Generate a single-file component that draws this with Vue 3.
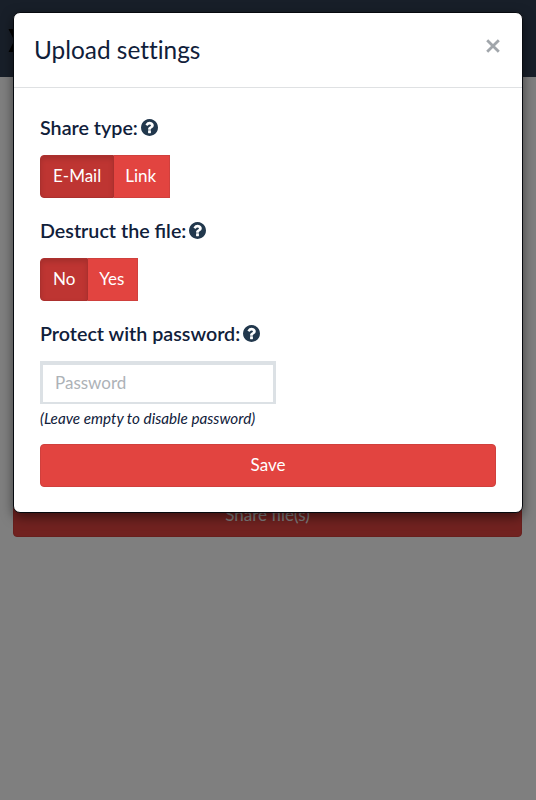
<template>
  <div class="page">
    <header class="navbar">
      <svg class="logo" viewBox="0 0 24 24"><path d="M0 0h6l6 8 6-8h6l-9 12 9 12h-6l-6-8-6 8H0l6-12z" /></svg>
    </header>
    <main class="content">
      <button type="button" class="btn btn-block">Share file(s)</button>
    </main>

    <div class="backdrop"></div>

    <div class="modal" role="dialog">
      <div class="modal-header">
        <h4 class="modal-title">Upload settings</h4>
        <button type="button" class="close" aria-label="Close">
          <svg viewBox="0 0 14 14"><path d="M1.2 1.2l11.6 11.6M12.8 1.2L1.2 12.8" /></svg>
        </button>
      </div>
      <form class="modal-body" @submit.prevent>
        <div v-for="group in groups" :key="group.name" class="form-group">
          <label class="form-label">
            {{ group.label }}
            <svg class="help" viewBox="128 128 1536 1536"><path :d="helpIcon" /></svg>
          </label>
          <div class="btn-group">
            <button
              v-for="option in group.options"
              :key="option"
              type="button"
              class="btn"
              :class="{ active: settings[group.name] === option }"
              @click="settings[group.name] = option"
            >{{ option }}</button>
          </div>
        </div>
        <div class="form-group">
          <label class="form-label" for="password">
            Protect with password:
            <svg class="help" viewBox="128 128 1536 1536"><path :d="helpIcon" /></svg>
          </label>
          <input id="password" v-model="settings.password" type="password" class="form-control" placeholder="Password">
          <em class="hint">(Leave empty to disable password)</em>
        </div>
        <button type="submit" class="btn btn-block">Save</button>
      </form>
    </div>
  </div>
</template>

<script setup>
import { ref } from 'vue';

const groups = [
  { name: 'share', label: 'Share type:', options: ['E-Mail', 'Link'] },
  { name: 'destruct', label: 'Destruct the file:', options: ['No', 'Yes'] }
];

const settings = ref({
  share: 'E-Mail',
  destruct: 'No',
  password: ''
});

const helpIcon = 'M1024 1376v-192q0-14-9-23t-23-9h-192q-14 0-23 9t-9 23v192q0 14 9 23t23 9h192q14 0 23-9t9-23zM1280 704q0-88-55.500-163t-138.500-116-170-41q-243 0-371 213-15 24 8 42l132 100q7 6 19 6 16 0 25-12 53-68 86-92 34-24 86-24 48 0 85.500 26t37.500 59q0 38-20 61t-68 45q-63 28-115.500 86.500t-52.500 125.500v36q0 14 9 23t23 9h192q14 0 23-9t9-23q0-19 21.500-49.500t54.500-49.500q32-18 49-28.500t46-35 44.500-48 28-60.500 12.500-81zM1664 896q0 209-103 385.500t-279.500 279.500-385.500 103-385.500-103-279.500-279.500-103-385.500 103-385.500 279.500-279.500 385.500-103 385.500 103 279.500 279.500 103 385.500z';
</script>

<style>
body {
  margin: 0;
  overflow: hidden;
}
</style>

<style scoped>
.page {
  position: relative;
  height: 800px;
  box-sizing: border-box;
  display: flex;
  flex-direction: column;
  background: #fff;
  color: #10203a;
  font-family: Lato, sans-serif;
  font-size: 17px;
}

.navbar {
  height: 77px;
  box-sizing: border-box;
  padding: 29px 8px 0;
  background: #303e52;
}

.logo {
  display: block;
  width: 24px;
  height: 23px;
}

.content {
  padding: 417px 14px 0 13px;
}

.backdrop {
  position: absolute;
  inset: 0;
  background: rgba(0, 0, 0, 0.5);
}

.modal {
  position: absolute;
  top: 12px;
  left: 13px;
  right: 13px;
  height: 501px;
  box-sizing: border-box;
  border: 1px solid #070a0f;
  border-radius: 7px;
  background: #fff;
  box-shadow: 0 4px 12px rgba(0, 0, 0, 0.5);
}

.modal-header {
  display: flex;
  justify-content: space-between;
  height: 75px;
  box-sizing: border-box;
  padding: 21px 22px 0 20px;
  border-bottom: 1px solid #dfe1e3;
}

.modal-title {
  margin: 0;
  font-size: 24.4px;
  line-height: 32px;
  font-weight: 400;
  font-variant-ligatures: none;
}

.close {
  width: 14px;
  height: 14px;
  margin-top: 5px;
  padding: 0;
  border: none;
  background: none;
  cursor: pointer;
}

.close svg {
  display: block;
  fill: none;
  stroke: #a1a6ab;
  stroke-width: 2.8;
}

.modal-body {
  padding: 25px 25px 0 26px;
}

.form-group {
  margin-bottom: 18px;
}

.form-group:nth-of-type(3) {
  margin-bottom: 14px;
}

.form-label {
  display: flex;
  align-items: center;
  gap: 3px;
  height: 28px;
  margin-bottom: 14px;
  font-size: 19.7px;
  font-weight: 600;
}

.help {
  width: 17px;
  height: 17px;
  fill: #22384d;
}

.btn-group {
  display: flex;
}

.btn {
  height: 43px;
  box-sizing: border-box;
  padding: 0 12px 2px;
  border: 1px solid #d0403d;
  border-radius: 4px;
  background: #e24440;
  color: #fff;
  font: inherit;
  cursor: pointer;
}

.btn-group .btn:first-child {
  border-radius: 4px 0 0 4px;
}

.btn-group .btn:last-child {
  padding-left: 11px;
  padding-right: 13px;
  border-left: none;
  border-radius: 0;
}

.btn.active {
  border-color: #ab302e;
  background: #be3532;
  box-shadow: inset 0 3px 5px rgba(0, 0, 0, 0.125);
}

.btn-block {
  display: block;
  width: 100%;
}

.modal-body .btn-block {
  width: 456px;
}

.form-control {
  display: block;
  width: 236px;
  height: 43px;
  box-sizing: border-box;
  padding: 0 12px 2px;
  border: 3px solid #dce1e5;
  border-top-width: 4px;
  border-bottom-width: 2px;
  font: inherit;
}

.form-control::placeholder {
  color: #adb2b7;
}

.hint {
  display: block;
  padding-top: 2px;
  font-size: 15.25px;
  line-height: 24px;
}
</style>
